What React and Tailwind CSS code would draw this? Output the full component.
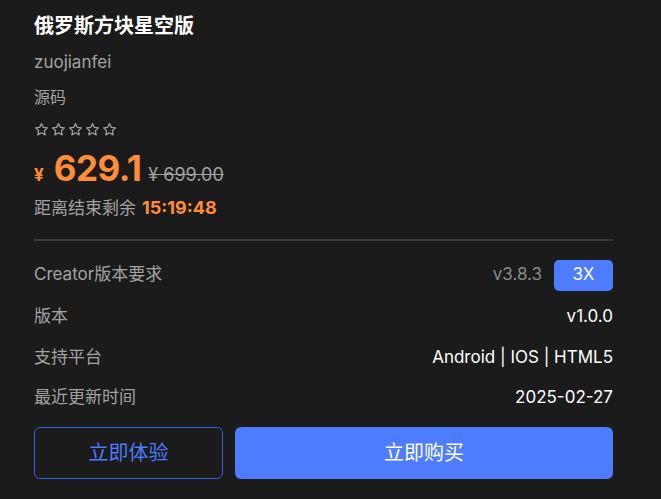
const FONT = { fontFamily: '"Inter", "Noto Sans CJK SC", sans-serif' };

const Star = () => (
    <svg width="15" height="15" viewBox="0 0 24 24" fill="none" stroke="#a0a0a0" strokeWidth="2" strokeLinejoin="round">
        <path d="M12 2.5l2.9 6.1 6.6.8-4.9 4.6 1.3 6.6L12 17.3l-5.9 3.3 1.3-6.6-4.9-4.6 6.6-.8z" />
    </svg>
);

const ROWS = [
    { label: "版本", value: "v1.0.0" },
    { label: "支持平台", value: "Android | IOS | HTML5" },
    { label: "最近更新时间", value: "2025-02-27" },
];

export default function App() {
    return (
        <div className="w-[661px] h-[499px] bg-[#1b1b1b] overflow-hidden" style={FONT}>
            <div className="pl-[34px] pr-[48px] pt-[12px]">
                <h1 className="text-[20px] leading-[28px] font-bold text-white">俄罗斯方块星空版</h1>
                <div className="mt-[10px] text-[17px] leading-[24px] text-[#a3a3a3]">zuojianfei</div>
                <div className="mt-[11px] text-[16px] leading-[24px] text-[#a3a3a3]">源码</div>
                <div className="mt-[13px] flex gap-[2px] h-[15px]">
                    {[0, 1, 2, 3, 4].map((i) => (
                        <Star key={i} />
                    ))}
                </div>
                <div className="mt-[11px] h-[40px] flex items-baseline leading-[40px] text-[#ff8c3b] font-bold overflow-hidden">
                    <span className="text-[17px] mr-[10px]">¥</span>
                    <span className="text-[35px] tracking-[-0.5px]">629.1</span>
                    <span className="ml-[7px] text-[18px] font-normal text-[#a3a3a3] line-through">¥ 699.00</span>
                </div>
                <div className="mt-[8px] flex items-center text-[17px] leading-[24px]">
                    <span className="text-[#a3a3a3]">距离结束剩余</span>
                    <span className="ml-[6px] text-[18px] font-bold text-[#ff8c3b]">15:19:48</span>
                </div>
                <div className="mt-[19px] h-[2px] bg-[#3a3a3a]" />
                <div className="mt-[18px] flex items-center justify-between h-[32px]">
                    <span className="text-[17px] text-[#a3a3a3]">Creator版本要求</span>
                    <div className="flex items-center gap-[12px]">
                        <span className="text-[17px] text-[#8a8a8a]">v3.8.3</span>
                        <span className="w-[59px] h-[31px] rounded-[5px] bg-[#4d7cfe] text-white text-[17px] flex items-center justify-center">3X</span>
                    </div>
                </div>
                <div className="mt-[14px] flex flex-col gap-[16.5px]">
                    {ROWS.map((row) => (
                        <div key={row.label} className="flex items-center justify-between h-[24px] text-[17px]">
                            <span className="text-[#a3a3a3]">{row.label}</span>
                            <span className="text-white">{row.value}</span>
                        </div>
                    ))}
                </div>
                <div className="mt-[17px] flex gap-[12px]">
                    <button className="w-[189px] h-[52px] rounded-[6px] border-[1.5px] border-[#2f62e0] text-[#4d7cfe] text-[20px]">
                        立即体验
                    </button>
                    <button className="flex-1 h-[52px] rounded-[6px] bg-[#4d7cfe] text-white text-[20px]">
                        立即购买
                    </button>
                </div>
            </div>
        </div>
    );
}
